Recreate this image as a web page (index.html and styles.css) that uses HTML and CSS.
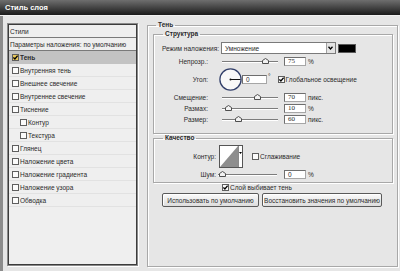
FILE: index.html
```html
<!DOCTYPE html>
<html>
    <head>
        <meta charset="utf-8">
        <link rel="stylesheet" href="styles.css">
    </head>
    <body>
        <div class="titlebar">Стиль слоя</div>
        <div class="main">
            <div class="styles-list">
                <div class="item head">Стили</div>
                <div class="item head">Параметры наложения: по умолчанию</div>
                <div class="item selected"><span class="box gold"><svg width="5" height="5" viewBox="0 0 5 5"><path d="M0.4 2.4 L1.9 4 L4.6 0.6" fill="none" stroke="#000" stroke-width="1.3"/></svg></span><b>Тень</b></div>
                <div class="item"><span class="box"></span>Внутренняя тень</div>
                <div class="item"><span class="box"></span>Внешнее свечение</div>
                <div class="item"><span class="box"></span>Внутреннее свечение</div>
                <div class="item"><span class="box"></span>Тиснение</div>
                <div class="item sub"><span class="box"></span>Контур</div>
                <div class="item sub"><span class="box"></span>Текстура</div>
                <div class="item"><span class="box"></span>Глянец</div>
                <div class="item"><span class="box"></span>Наложение цвета</div>
                <div class="item"><span class="box"></span>Наложение градиента</div>
                <div class="item"><span class="box"></span>Наложение узора</div>
                <div class="item"><span class="box"></span>Обводка</div>
            </div>

            <fieldset class="group outer">
                <legend>Тень</legend>

                <fieldset class="group structure">
                    <legend>Структура</legend>
                    <div class="row r-mode">
                        <span>Режим наложения:</span>
                        <div class="select">
                            <span class="select-text">Умножение</span>
                            <span class="select-btn"><svg width="5" height="4" viewBox="0 0 5 4"><path d="M0.5 0.8 L2.5 3 L4.5 0.8" fill="none" stroke="#000" stroke-width="1.3"/></svg></span>
                        </div>
                        <span class="swatch"></span>
                    </div>
                    <div class="row r-slider first">
                        <span class="label">Непрозр.:</span>
                        <div class="slider"><div class="track"></div><svg class="thumb" style="left:40px" width="7" height="6" viewBox="0 0 7 6"><path d="M0.5 5.5 V2.5 L3.5 0.5 L6.5 2.5 V5.5 Z" fill="#f2f2f2" stroke="#4e4e4e"/></svg></div>
                        <span class="num">75</span>
                        <span class="unit">%</span>
                    </div>
                    <div class="row r-angle">
                        <span class="label">Угол:</span>
                        <svg class="dial" width="23" height="23" viewBox="0 0 23 23"><circle cx="11.5" cy="11.5" r="10.6" fill="#f8f8f8" stroke="#33406b" stroke-width="1.3"/><circle cx="11.5" cy="11.5" r="1" fill="#111"/><path d="M11.5 11.5 H21.5" stroke="#111" stroke-width="1"/></svg>
                        <span class="num sans angle">0</span>
                        <span class="deg">°</span>
                        <span class="box check-global"><svg width="5" height="5" viewBox="0 0 5 5"><path d="M0.4 2.4 L1.9 4 L4.6 0.6" fill="none" stroke="#000" stroke-width="1.3"/></svg></span>
                        <span class="after-box">Глобальное освещение</span>
                    </div>
                    <div class="row r-slider">
                        <span class="label">Смещение:</span>
                        <div class="slider"><div class="track"></div><svg class="thumb" style="left:32px" width="7" height="6" viewBox="0 0 7 6"><path d="M0.5 5.5 V2.5 L3.5 0.5 L6.5 2.5 V5.5 Z" fill="#f2f2f2" stroke="#4e4e4e"/></svg></div>
                        <span class="num">70</span>
                        <span class="unit">пикс.</span>
                    </div>
                    <div class="row r-slider tight">
                        <span class="label">Размах:</span>
                        <div class="slider"><div class="track"></div><svg class="thumb" style="left:3px" width="7" height="6" viewBox="0 0 7 6"><path d="M0.5 5.5 V2.5 L3.5 0.5 L6.5 2.5 V5.5 Z" fill="#f2f2f2" stroke="#4e4e4e"/></svg></div>
                        <span class="num">10</span>
                        <span class="unit">%</span>
                    </div>
                    <div class="row r-slider">
                        <span class="label">Размер:</span>
                        <div class="slider"><div class="track"></div><svg class="thumb" style="left:13px" width="7" height="6" viewBox="0 0 7 6"><path d="M0.5 5.5 V2.5 L3.5 0.5 L6.5 2.5 V5.5 Z" fill="#f2f2f2" stroke="#4e4e4e"/></svg></div>
                        <span class="num">60</span>
                        <span class="unit">пикс.</span>
                    </div>
                </fieldset>

                <fieldset class="group quality">
                    <legend>Качество</legend>
                    <div class="row r-contour">
                        <span class="label wide">Контур:</span>
                        <div class="contour">
                            <svg width="18" height="21" viewBox="0 0 18 21"><rect width="18" height="21" fill="#fff"/><path d="M0 21 L18 0 L18 21 Z" fill="#8e8e8e"/></svg>
                            <span class="contour-btn"><svg width="3" height="2" viewBox="0 0 3 2"><path d="M0 0 H3 L1.5 2 Z" fill="#000"/></svg></span>
                        </div>
                        <span class="box check-smooth"></span>
                        <span class="after-box">Сглаживание</span>
                    </div>
                    <div class="row r-noise">
                        <span class="label wide">Шум:</span>
                        <div class="slider noise"><div class="track"></div><svg class="thumb" style="left:1px" width="7" height="6" viewBox="0 0 7 6"><path d="M0.5 5.5 V2.5 L3.5 0.5 L6.5 2.5 V5.5 Z" fill="#f2f2f2" stroke="#4e4e4e"/></svg></div>
                        <span class="num sans">0</span>
                        <span class="unit">%</span>
                    </div>
                </fieldset>

                <div class="knockout">
                    <span class="box"><svg width="5" height="5" viewBox="0 0 5 5"><path d="M0.4 2.4 L1.9 4 L4.6 0.6" fill="none" stroke="#000" stroke-width="1.3"/></svg></span>
                    <span class="after-box">Слой выбивает тень</span>
                </div>

                <div class="buttons">
                    <div class="btn btn-default">Использовать по умолчанию</div>
                    <div class="btn btn-reset">Восстановить значения по умолчанию</div>
                </div>
            </fieldset>
        </div>
    </body>
</html>
```

FILE: styles.css
```css
* {
    box-sizing: border-box;
}

body {
    margin: 0;
    width: 400px;
    height: 271px;
    overflow: hidden;
    background: #e6e6e6;
    font-family: "Liberation Sans", Arial, sans-serif;
    font-size: 6.5px;
    color: #2a2a2a;
}

.titlebar {
    height: 16px;
    line-height: 15px;
    padding-left: 5px;
    background: linear-gradient(#6e6e6e, #1b1b1b);
    border-bottom: 1px solid #f2f2f2;
    color: #ffffff;
    font-weight: bold;
    font-size: 7.5px;
}

.main {
    display: flex;
    align-items: flex-start;
    height: 255px;
    padding: 5px 2px 0 4px;
    border-left: 3px solid #8c8c8c;
}

/* left list */

.styles-list {
    width: 131px;
    height: 243px;
    margin-top: 2px;
    padding: 1px;
    background: #efefef;
    border: 1px solid #8a8a8a;
    box-shadow: inset 1px 1px 0 #3c3c3c, inset -1px -1px 0 #3c3c3c, 1px 1px 0 #ffffff;
}

.item {
    display: flex;
    align-items: center;
    gap: 1px;
    height: 13px;
    padding-left: 3px;
    border-bottom: 1px solid #e2e2e2;
}

.item.head {
    padding-left: 1px;
    border-bottom: 1px solid #7a7a7a;
}

.item.selected {
    background: #c3c3c3;
    border-bottom-color: #c3c3c3;
}

.item.sub {
    padding-left: 11px;
}

.box {
    display: flex;
    align-items: center;
    justify-content: center;
    width: 7px;
    height: 7px;
    flex: none;
    background: #fbfbfb;
    border: 1px solid #5e5e5e;
}

.box.gold {
    background: #e9c85a;
}

/* right side */

.group {
    margin: 0;
    padding: 0;
    border: 1px solid #a8a8a8;
    box-shadow: inset 1px 1px 0 #ffffff, 1px 1px 0 #ffffff;
}

.group legend {
    padding: 0 2px;
    margin-left: 9px;
    line-height: 8px;
    font-weight: bold;
}

.outer {
    width: 251px;
    height: 246px;
    margin-left: 9px;
    padding: 0 4px 0 5px;
}

.outer > legend {
    margin-left: 3px;
}

.structure {
    margin-top: 1px;
    padding-bottom: 9px;
}

.quality {
    padding-bottom: 3px;
}

.row {
    display: flex;
    align-items: center;
    height: 10px;
    margin-top: 1px;
}

.label {
    width: 54px;
    text-align: right;
    flex: none;
}

.label.wide {
    width: 62px;
}

.r-mode {
    height: 12px;
    margin-top: 4px;
    padding-left: 8px;
    gap: 2px;
}

.select {
    display: flex;
    align-items: center;
    width: 115px;
    height: 12px;
    background: #ffffff;
    border: 1px solid #7a7a7a;
}

.select-text {
    flex: 1;
    padding-left: 3px;
}

.select-btn {
    display: flex;
    align-items: center;
    justify-content: center;
    width: 9px;
    height: 10px;
    background: #e4e4e4;
    border-left: 1px solid #a0a0a0;
}

.swatch {
    width: 18px;
    height: 9px;
    background: #000000;
    border: 1px solid #5a5a5a;
}

.r-slider.first {
    margin-top: 2px;
}

.slider {
    position: relative;
    width: 56px;
    height: 10px;
    margin-left: 14px;
    flex: none;
}

.slider.noise {
    width: 59px;
    margin-left: 2px;
}

.track {
    height: 1px;
    margin-top: 5px;
    background: #7c7c7c;
    box-shadow: 0 1px 0 #ffffff;
}

.thumb {
    position: absolute;
    top: 2px;
}

.num {
    width: 22px;
    height: 9px;
    margin-left: 6px;
    padding-left: 3px;
    flex: none;
    background: #ffffff;
    border: 1px solid #a6a6a6;
    border-top-color: #6e6e6e;
    border-left-color: #6e6e6e;
    font-family: "Liberation Serif", serif;
    font-size: 7px;
    line-height: 7px;
}

.num.sans {
    font-family: "Liberation Sans", Arial, sans-serif;
    font-size: 6.5px;
}

.unit {
    margin-left: 2px;
}

.r-angle {
    height: 24px;
}

.dial {
    margin-left: 11px;
    flex: none;
}

.num.angle {
    width: 25px;
    margin-left: 0;
}

.deg {
    margin-left: 1px;
    align-self: flex-start;
    margin-top: 6px;
}

.check-global {
    margin-left: 7px;
}

.after-box {
    margin-left: 1px;
}

.r-contour {
    height: 23px;
    margin-top: 3px;
}

.contour {
    display: flex;
    width: 24px;
    height: 23px;
    margin-left: 3px;
    border: 1px solid #555555;
}

.contour-btn {
    display: flex;
    justify-content: center;
    padding-top: 6px;
    width: 4px;
    background: #ffffff;
    border-left: 1px solid #8a8a8a;
}

.check-smooth {
    margin-left: 9px;
}

.r-noise .num {
    margin-left: 7px;
}

.knockout {
    display: flex;
    align-items: center;
    height: 8px;
    margin-top: 0;
    padding-left: 69px;
}

.buttons {
    display: flex;
    gap: 3px;
    margin-top: 2px;
    padding-left: 9px;
}

.btn {
    display: flex;
    align-items: center;
    justify-content: center;
    height: 14px;
    background: linear-gradient(#fbfbfb, #dddddd);
    border: 1px solid #5a5a5a;
    border-radius: 2px;
    box-shadow: inset 1px 1px 0 #ffffff;
}

.btn-default {
    width: 97px;
}

.btn-reset {
    width: 120px;
}
```
